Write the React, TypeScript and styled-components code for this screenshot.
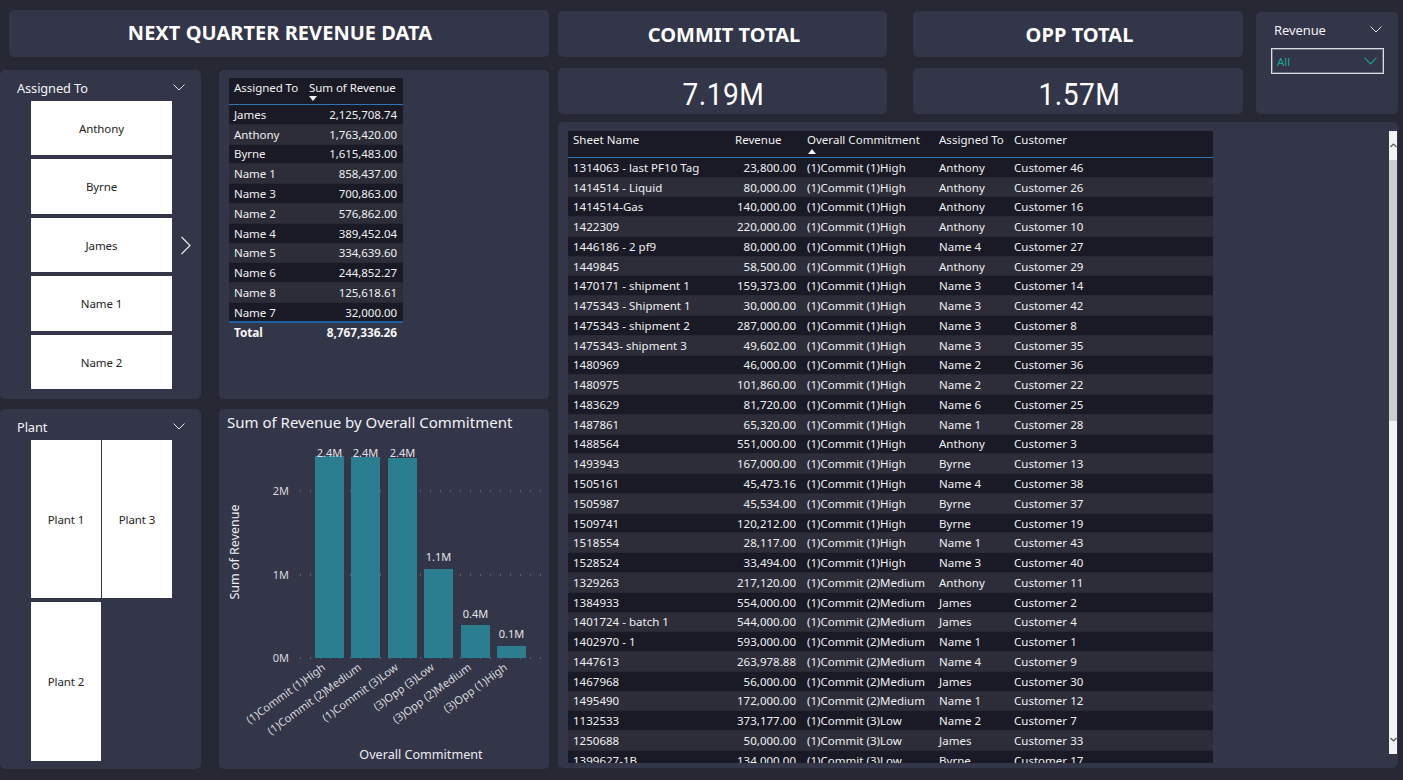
import React from 'react';
import styled, { createGlobalStyle } from 'styled-components';

const Global = createGlobalStyle`
  html, body { margin: 0; padding: 0; background: #262833; }
  body { font-family: "Noto Sans", "Open Sans", sans-serif; }
`;

const Page = styled.div`
  width: 1403px; height: 780px; overflow: hidden; background: #262833; color: #fff;
  display: grid; grid-template-columns: 549px 1fr; column-gap: 9px; padding: 10px 5px 11px 0; box-sizing: border-box;
`;
const Left = styled.div`
  display: grid; grid-template-columns: 201px 330px; column-gap: 18px;
  grid-template-rows: 47px 342px 370px; height: 759px; align-content: start;
`;
const Panel = styled.div`
  background: #333548; border-radius: 5px; box-sizing: border-box;
`;
const TitlePanel = styled(Panel)`
  grid-column: 1 / span 2; margin-left: 9px; display: flex; align-items: center; justify-content: center;
  font-size: 20px; font-weight: 700; letter-spacing: 0.04px; padding: 0 0 2px 2px;
`;
const SlicerPanel = styled(Panel)<{ $top: number }>`
  margin-top: ${p => p.$top}px; padding: 8px 16px 0 17px; display: flex; flex-direction: column; position: relative;
`;
const SlicerHeader = styled.div`
  display: flex; justify-content: space-between; align-items: center; font-size: 12.8px; height: 19px; color: #f4f4f6;
  margin-bottom: 4px; letter-spacing: -0.1px;
`;
const Chevron = styled.svg<{ $accent?: boolean }>`
  width: ${p => p.$accent ? 13 : 12}px; height: ${p => p.$accent ? 8 : 7}px; fill: none;
  stroke: ${p => p.$accent ? '#1aa596' : '#e6e6ea'}; stroke-width: 1; flex: none;
`;
const AssignedList = styled.div`
  display: flex; flex-direction: column; gap: 4.3px; margin-left: 14px; width: 141px;
`;
const Tile = styled.div`
  background: #fff; color: #252423; display: flex; align-items: center; justify-content: center;
  font-size: 11.5px; letter-spacing: -0.1px;
`;
const AssignedTile = styled(Tile)`
  height: 54.2px;
`;
const NextArrow = styled.svg`
  position: absolute; left: 180px; top: 166px; width: 12px; height: 19px; fill: none; stroke: #e6e6ea; stroke-width: 1.2;
`;
const PlantGrid = styled.div`
  display: grid; grid-template-columns: 70px 70px; column-gap: 1px; row-gap: 4px; grid-template-rows: 158px 159px;
  margin-left: 14px; width: 141px;
`;
const TablePanel = styled(Panel)`
  margin-top: 13px; padding: 8px 0 0 10px;
`;
const ChartPanel = styled(Panel)`
  margin-top: 10px; position: relative;
`;
const ChartTitle = styled.div`
  font-size: 15px; color: #f2f2f5; padding: 3px 0 0 8px; height: 20px; white-space: nowrap; line-height: 20px;
`;
const ChartSvg = styled.svg`
  display: block; width: 330px; height: 337px;
  text { font-family: "Noto Sans", "Open Sans", sans-serif; }
`;

const SummaryTable = styled.div`
  width: 174px; font-size: 11.5px; letter-spacing: -0.05px;
`;
const SummaryHead = styled.div`
  display: grid; grid-template-columns: 74px 100px; height: 26px; background: #191a25; border-bottom: 1px solid #2f75b5;
  color: #f0f0f2; position: relative;
`;
const HeadCell = styled.div<{ $pad?: number; $top?: number }>`
  padding: ${p => p.$top ?? 2}px 0 0 ${p => p.$pad ?? 5}px; white-space: nowrap;
`;
const SortArrow = styled.span<{ $up?: boolean; $left: number }>`
  position: absolute; left: ${p => p.$left}px; bottom: 3px; width: 0; height: 0;
  border-left: 4px solid transparent; border-right: 4px solid transparent;
  ${p => p.$up ? 'border-bottom: 5px solid #f2f2f2;' : 'border-top: 5px solid #f2f2f2;'}
`;
const SummaryRow = styled.div<{ $alt: boolean }>`
  display: grid; grid-template-columns: 74px 100px; height: 19.8px; align-items: center;
  background: ${p => p.$alt ? '#2c2d39' : '#191a25'}; color: #f0f0f2; border-bottom: 1px solid #262833; box-sizing: border-box;
`;
const NameCell = styled.div`
  padding-left: 5px; white-space: nowrap;
`;
const NumCell = styled.div`
  padding-right: 6px; text-align: right; white-space: nowrap;
`;
const SummaryTotal = styled.div`
  display: grid; grid-template-columns: 74px 100px; height: 19px; align-items: center; font-weight: 700; border-top: 2px solid #1f5fa3;
  margin-top: -1.8px; color: #f6f6f8; font-size: 11.8px;
`;

const Right = styled.div`
  display: grid; height: 758px;
  grid-template-rows: 47px 57px 1fr;
  grid-template-columns: 329px 26px 330px 13px 142px;
`;
const HeadPanel = styled(Panel)`
  margin-top: 1px; display: flex; align-items: center; justify-content: center; font-size: 20px; font-weight: 700;
  letter-spacing: 0.05px; padding-left: 3px;
`;
const ValuePanel = styled(Panel)`
  margin-top: 11px; display: flex; align-items: center; justify-content: center; padding: 6px 0 0 2px;
`;
const ValueText = styled.span`
  font-family: Roboto, "Liberation Sans", sans-serif; font-size: 32px; letter-spacing: 0.5px;
  transform: scaleX(0.88); display: inline-block;
`;
const Gap = styled.div``;
const RevenuePanel = styled(Panel)`
  margin-top: 2px; grid-column: 5; grid-row: 1 / span 2; padding: 8px 15px 0 15px; height: 102px;
`;
const RevenueHead = styled.div`
  display: flex; justify-content: space-between; align-items: center; font-size: 13px; color: #f0f0f4; height: 19px;
  letter-spacing: -0.1px; padding: 0 1px 0 3px;
`;
const Dropdown = styled.div`
  margin-top: 9px; height: 26px; width: 113px; box-sizing: border-box; border: 1px solid #dcdce2;
  box-shadow: inset 0 0 0 1px rgba(220, 220, 226, 0.35); display: flex;
  align-items: center; justify-content: space-between; padding: 0 6px 0 5px; font-size: 11.5px; color: #1aa596;
`;
const DetailPanel = styled(Panel)`
  grid-column: 1 / -1; margin-top: 8px; height: 646px; padding: 9px 0 0 10px; position: relative; overflow: hidden;
`;
const DetailClip = styled.div`
  width: 645px; height: 632px; overflow: hidden; font-size: 11.5px; letter-spacing: 0.02px;
`;
const colTpl = '167px 67px 132px 75px 204px';
const DetailHead = styled.div`
  display: grid; grid-template-columns: ${colTpl}; height: 25.9px; background: #191a25; border-bottom: 1px solid #2f75b5; color: #f0f0f2; position: relative;
`;
const DetailRow = styled.div<{ $alt: boolean }>`
  display: grid; grid-template-columns: ${colTpl}; height: 19.77px; align-items: center; box-sizing: border-box;
  background: ${p => p.$alt ? '#2c2d39' : '#191a25'}; color: #f0f0f2; border-bottom: 1px solid #262833;
`;
const ScrollTrack = styled.div`
  position: absolute; left: 831px; top: 9px; width: 8px; height: 623px; background: #f3f3f3; display: flex; flex-direction: column;
`;
const ScrollButton = styled.div`
  height: 29px; display: flex; align-items: center; justify-content: center; flex: none;
`;
const ScrollThumb = styled.div`
  height: 261px; background: #cdcdcd; flex: none;
`;
const ScrollFill = styled.div`
  flex: 1;
`;
const ScrollIcon = styled.svg`
  width: 7px; height: 5px; fill: none; stroke: #555; stroke-width: 1.1;
`;

const assigned = ['Anthony', 'Byrne', 'James', 'Name 1', 'Name 2'];
const summary: [string, string][] = [
  ['James', '2,125,708.74'], ['Anthony', '1,763,420.00'], ['Byrne', '1,615,483.00'], ['Name 1', '858,437.00'],
  ['Name 3', '700,863.00'], ['Name 2', '576,862.00'], ['Name 4', '389,452.04'], ['Name 5', '334,639.60'],
  ['Name 6', '244,852.27'], ['Name 8', '125,618.61'], ['Name 7', '32,000.00'],
];
const H = '(1)Commit (1)High', M = '(1)Commit (2)Medium', L = '(1)Commit (3)Low';
const detail: [string, string, string, string, string][] = [
  ['1314063 - last PF10 Tag', '23,800.00', H, 'Anthony', 'Customer 46'],
  ['1414514 - Liquid', '80,000.00', H, 'Anthony', 'Customer 26'],
  ['1414514-Gas', '140,000.00', H, 'Anthony', 'Customer 16'],
  ['1422309', '220,000.00', H, 'Anthony', 'Customer 10'],
  ['1446186 - 2 pf9', '80,000.00', H, 'Name 4', 'Customer 27'],
  ['1449845', '58,500.00', H, 'Anthony', 'Customer 29'],
  ['1470171 - shipment 1', '159,373.00', H, 'Name 3', 'Customer 14'],
  ['1475343 - Shipment 1', '30,000.00', H, 'Name 3', 'Customer 42'],
  ['1475343 - shipment 2', '287,000.00', H, 'Name 3', 'Customer 8'],
  ['1475343- shipment 3', '49,602.00', H, 'Name 3', 'Customer 35'],
  ['1480969', '46,000.00', H, 'Name 2', 'Customer 36'],
  ['1480975', '101,860.00', H, 'Name 2', 'Customer 22'],
  ['1483629', '81,720.00', H, 'Name 6', 'Customer 25'],
  ['1487861', '65,320.00', H, 'Name 1', 'Customer 28'],
  ['1488564', '551,000.00', H, 'Anthony', 'Customer 3'],
  ['1493943', '167,000.00', H, 'Byrne', 'Customer 13'],
  ['1505161', '45,473.16', H, 'Name 4', 'Customer 38'],
  ['1505987', '45,534.00', H, 'Byrne', 'Customer 37'],
  ['1509741', '120,212.00', H, 'Byrne', 'Customer 19'],
  ['1518554', '28,117.00', H, 'Name 1', 'Customer 43'],
  ['1528524', '33,494.00', H, 'Name 3', 'Customer 40'],
  ['1329263', '217,120.00', M, 'Anthony', 'Customer 11'],
  ['1384933', '554,000.00', M, 'James', 'Customer 2'],
  ['1401724 - batch 1', '544,000.00', M, 'James', 'Customer 4'],
  ['1402970 - 1', '593,000.00', M, 'Name 1', 'Customer 1'],
  ['1447613', '263,978.88', M, 'Name 4', 'Customer 9'],
  ['1467968', '56,000.00', M, 'James', 'Customer 30'],
  ['1495490', '172,000.00', M, 'Name 1', 'Customer 12'],
  ['1132533', '373,177.00', L, 'Name 2', 'Customer 7'],
  ['1250688', '50,000.00', L, 'James', 'Customer 33'],
  ['1399627-1B', '134,000.00', L, 'Byrne', 'Customer 17'],
];

const bars = [
  { x: 96, top: 24, label: '2.4M', ly: 25, cat: '(1)Commit (1)High' },
  { x: 132, top: 25, label: '2.4M', ly: 25, cat: '(1)Commit (2)Medium' },
  { x: 169, top: 26, label: '2.4M', ly: 25, cat: '(1)Commit (3)Low' },
  { x: 205, top: 137, label: '1.1M', ly: 129, cat: '(3)Opp (3)Low' },
  { x: 242, top: 193, label: '0.4M', ly: 186, cat: '(3)Opp (2)Medium' },
  { x: 278, top: 214, label: '0.1M', ly: 206, cat: '(3)Opp (1)High' },
];
const BASE = 226;

const Down = () => <Chevron viewBox="0 0 12 7"><path d="M0.5 0.5 L6 6 L11.5 0.5" /></Chevron>;

export default function App() {
  return (
    <Page>
      <Global />
      <Left>
        <TitlePanel>NEXT QUARTER REVENUE DATA</TitlePanel>
        <SlicerPanel $top={13}>
          <SlicerHeader>Assigned To<Down /></SlicerHeader>
          <AssignedList>
            {assigned.map(a => <AssignedTile key={a}>{a}</AssignedTile>)}
          </AssignedList>
          <NextArrow viewBox="0 0 12 19"><path d="M1.5 1 L10 9.5 L1.5 18" /></NextArrow>
        </SlicerPanel>
        <TablePanel>
          <SummaryTable>
            <SummaryHead>
              <HeadCell>Assigned To</HeadCell>
              <HeadCell $pad={6}>Sum of Revenue</HeadCell>
              <SortArrow $left={80} />
            </SummaryHead>
            {summary.map(([n, v], i) => (
              <SummaryRow key={n} $alt={i % 2 === 1}>
                <NameCell>{n}</NameCell><NumCell>{v}</NumCell>
              </SummaryRow>
            ))}
            <SummaryTotal><NameCell>Total</NameCell><NumCell>8,767,336.26</NumCell></SummaryTotal>
          </SummaryTable>
        </TablePanel>
        <SlicerPanel $top={10}>
          <SlicerHeader>Plant<Down /></SlicerHeader>
          <PlantGrid>
            <Tile>Plant 1</Tile>
            <Tile>Plant 3</Tile>
            <Tile>Plant 2</Tile>
          </PlantGrid>
        </SlicerPanel>
        <ChartPanel>
          <ChartTitle>Sum of Revenue by Overall Commitment</ChartTitle>
          <ChartSvg viewBox="0 0 330 337">
            {[59, 143, 226].map(y => (
              <line key={y} x1={81} x2={322} y1={y} y2={y} stroke="#8a8c9c" strokeWidth={1} strokeDasharray="1 9" />
            ))}
            {[['2M', 59], ['1M', 143], ['0M', 226]].map(([t, y]) => (
              <text key={t} x={70} y={(y as number) + 4} fontSize={11} fill="#d9d9de" textAnchor="end">{t}</text>
            ))}
            {bars.map(b => (
              <g key={b.cat}>
                <rect x={b.x} y={b.top} width={29} height={BASE - b.top} fill="#2b7d90" />
                <text x={b.x + 14.5} y={b.ly} fontSize={11} fill="#e4e4e8" textAnchor="middle">{b.label}</text>
                <text transform={`translate(${b.x + 11} ${BASE + 11}) rotate(-36)`} fontSize={11} fill="#d9d9de" textAnchor="end">{b.cat}</text>
              </g>
            ))}
            <text transform="translate(20 120) rotate(-90)" fontSize={12.5} fill="#ececf0" textAnchor="middle">Sum of Revenue</text>
            <text x={202} y={327} fontSize={12.6} fill="#ececf0" textAnchor="middle">Overall Commitment</text>
          </ChartSvg>
        </ChartPanel>
      </Left>
      <Right>
        <HeadPanel>COMMIT TOTAL</HeadPanel>
        <Gap />
        <HeadPanel>OPP TOTAL</HeadPanel>
        <Gap />
        <RevenuePanel>
          <RevenueHead>Revenue<Down /></RevenueHead>
          <Dropdown>All<Chevron $accent viewBox="0 0 12 7" preserveAspectRatio="none"><path d="M0.5 0.5 L6 6 L11.5 0.5" /></Chevron></Dropdown>
        </RevenuePanel>
        <ValuePanel><ValueText>7.19M</ValueText></ValuePanel>
        <Gap />
        <ValuePanel><ValueText>1.57M</ValueText></ValuePanel>
        <Gap />
        <DetailPanel>
          <DetailClip>
            <DetailHead>
              <HeadCell $top={1}>Sheet Name</HeadCell>
              <HeadCell $pad={0} $top={1}>Revenue</HeadCell>
              <HeadCell $top={1}>Overall Commitment</HeadCell>
              <HeadCell $top={1}>Assigned To</HeadCell>
              <HeadCell $top={1}>Customer</HeadCell>
              <SortArrow $up $left={240} />
            </DetailHead>
            {detail.map((r, i) => (
              <DetailRow key={r[0] + i} $alt={i % 2 === 1}>
                <NameCell>{r[0]}</NameCell>
                <NumCell>{r[1]}</NumCell>
                <NameCell>{r[2]}</NameCell>
                <NameCell>{r[3]}</NameCell>
                <NameCell>{r[4]}</NameCell>
              </DetailRow>
            ))}
          </DetailClip>
          <ScrollTrack>
            <ScrollButton><ScrollIcon viewBox="0 0 7 5"><path d="M0.5 4 L3.5 1 L6.5 4" /></ScrollIcon></ScrollButton>
            <ScrollThumb />
            <ScrollFill />
            <ScrollButton><ScrollIcon viewBox="0 0 7 5"><path d="M0.5 1 L3.5 4 L6.5 1" /></ScrollIcon></ScrollButton>
          </ScrollTrack>
        </DetailPanel>
      </Right>
    </Page>
  );
}
